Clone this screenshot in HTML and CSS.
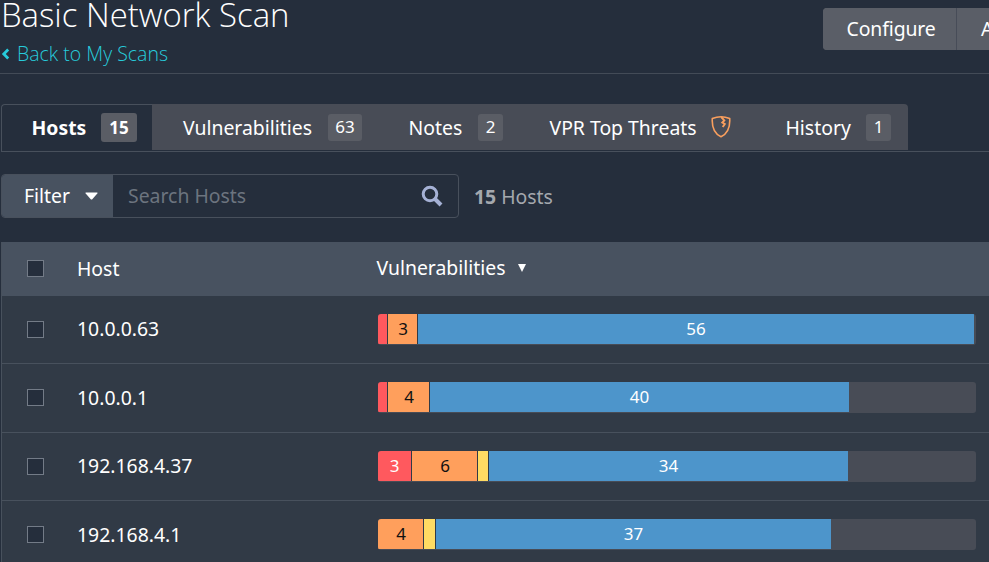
FILE: index.html
```html
<!DOCTYPE html>
<html lang="en">
<head>
<meta charset="utf-8">
<title>Basic Network Scan</title>
<link rel="stylesheet" href="styles.css">
</head>
<body>
<header class="page-header">
  <div class="heading">
    <h1>Basic Network Scan</h1>
    <a class="back"><svg width="9" height="12" viewBox="0 0 9 12"><path d="M7.2 1.6 2.8 6l4.4 4.4" fill="none" stroke="currentColor" stroke-width="2.8"/></svg><span>Back to My Scans</span></a>
  </div>
  <div class="actions"><button>Configure</button><button>Audit Trail</button></div>
</header>
<nav class="tabs">
  <a class="tab active"><span class="tab-hosts">Hosts</span><b class="badge">15</b></a>
  <div class="tab-group">
    <a class="tab tab-vulns"><span>Vulnerabilities</span><b class="badge wide">63</b></a>
    <a class="tab tab-notes"><span>Notes</span><b class="badge">2</b></a>
    <a class="tab tab-vpr"><span>VPR Top Threats</span><svg class="shield" width="20" height="24" viewBox="0 0 20 24"><path d="M10 1.7C7 1.7 4 2.4 1.3 3.5c-.5 8 1.4 14.800 8.700 18.200C17.300 18.300 19.200 11.500 18.700 3.500 16 2.400 13 1.700 10 1.700Z" fill="none" stroke="#f99f5e" stroke-width="1.600"/><path d="m10.200 2 3.100 3.400-2 2.100 2.500 1.500-2.100 3" fill="none" stroke="#f99f5e" stroke-width="1.900"/></svg></a>
    <a class="tab tab-history"><span>History</span><b class="badge">1</b></a>
  </div>
</nav>
<section class="toolbar">
  <div class="search">
    <button class="filter"><span>Filter</span><svg width="13" height="8" viewBox="0 0 13 8"><path d="M1 .5h11q1 .2.300 1L7.300 7.200q-.8.700-1.600 0L.700 1.500Q0 .700 1 .5Z" fill="#fff"/></svg></button>
    <div class="field"><span>Search Hosts</span><svg width="22" height="22" viewBox="0 0 22 22" fill="none" stroke="#a5b1d5"><circle cx="9" cy="9" r="6.800" stroke-width="3"/><path d="m14 14 6 6" stroke-width="4"/></svg></div>
  </div>
  <p class="count"><b>15</b> Hosts</p>
</section>
<main class="table">
  <div class="row head"><i class="check"></i><span class="host">Host</span><span class="sort">Vulnerabilities<svg width="8" height="8" viewBox="0 0 8 8"><path d="M0 0h8L4 8Z" fill="#fff"/></svg></span></div>
  <div class="row r1"><i class="check"></i><span class="host">10.0.0.63</span><div class="bar"><i class="crit" style="width:9px"></i><i class="high" style="width:29px">3</i><i class="info" style="width:556px">56</i></div></div>
  <div class="row r2"><i class="check"></i><span class="host">10.0.0.1</span><div class="bar"><i class="crit" style="width:9px"></i><i class="high" style="width:41px">4</i><i class="info" style="width:419px">40</i></div></div>
  <div class="row r3"><i class="check"></i><span class="host">192.168.4.37</span><div class="bar"><i class="crit" style="width:33px">3</i><i class="high" style="width:65px">6</i><i class="med" style="width:10px"></i><i class="info" style="width:359px">34</i></div></div>
  <div class="row r4"><i class="check"></i><span class="host">192.168.4.1</span><div class="bar"><i class="high" style="width:45px">4</i><i class="med" style="width:11px"></i><i class="info" style="width:395px">37</i></div></div>
</main>
</body>
</html>
```
FILE: styles.css
```css
* { box-sizing: border-box; }
html { overflow: hidden; }
body { margin: 0; width: 989px; height: 562px; overflow: hidden; background: #252e3c; color: #fff; font: 19.4px/28px "Noto Sans", "Open Sans", sans-serif; white-space: nowrap; }
svg { display: block; flex: none; }
button { border: 0; padding: 0; margin: 0; color: #fff; font: inherit; }
h1 { margin: 0; padding-left: 1px; font: 300 32.9px/30px "Open Sans", sans-serif; }
.page-header { display: flex; justify-content: space-between; height: 74px; border-bottom: 1px solid #434b57; }
.heading { flex: none; }
.back { display: flex; align-items: center; margin-top: 10px; padding-left: 1px; gap: 7px; color: #27cbdb; font: 300 19.5px/28px "Open Sans", sans-serif; }
.actions { display: flex; flex: none; width: 166px; height: 42px; margin-top: 8px; overflow: hidden; border-radius: 4px 0 0 4px; background: #5a5e67; }
.actions button { flex: none; background: #5a5e67; padding: 0 0 0 24px; text-align: left; }
.actions button:first-child { width: 134px; padding-left: 23.5px; border-right: 1px solid #474c58; letter-spacing: -.1px; }
.tabs { display: flex; margin: 30px 0 0 1px; height: 48px; border-bottom: 1px solid #48505c; }
.tab { display: flex; align-items: center; height: 46px; }
.tab-group .tab > span { padding-top: 2px; }
.active { width: 151px; height: 47px; padding: 0 0 1px 29.5px; border: 1px solid #48505c; border-width: 1px 0 0 1px; border-radius: 4px 0 0 0; font-weight: 700; }
.tab-hosts { width: 69.5px; }
.tab-group { display: flex; width: 756px; height: 46px; background: #484c56; border-radius: 0 4px 0 0; }
.tab-vulns { width: 226px; padding-left: 31px; }
.tab-vulns span { width: 145px; }
.tab-notes { width: 141px; padding-left: 30.5px; }
.tab-notes span { width: 69.5px; }
.tab-vpr { width: 236px; padding-left: 30.5px; }
.tab-vpr span { width: 161.5px; }
.tab-history { padding-left: 30.5px; }
.tab-history span { width: 80.5px; }
.badge { width: 25px; height: 27px; border-radius: 3px; background: #5a5d65; font-size: 17px; line-height: 25px; font-weight: 400; text-align: center; }
.wide { width: 34px; }
.active .badge { width: 36px; height: 29px; line-height: 29px; font-weight: 700; font-size: 17px; }
.toolbar { display: flex; align-items: center; margin: 22px 0 24px 1px; height: 44px; }
.search { display: flex; width: 458px; height: 44px; border: 1px solid #48505c; border-radius: 4px; overflow: hidden; }
.filter { display: flex; align-items: center; width: 111px; padding-left: 22px; gap: 15px; background: #485260; }
.field { display: flex; flex: 1; align-items: center; justify-content: space-between; padding: 0 15px; color: #6c747f; }
.count { margin: 2px 0 0 15px; color: #a4a8ae; }
.table { border-left: 1px solid #48515d; margin-left: 1px; background: #313a46; }
.row { display: flex; align-items: center; height: 68px; border-bottom: 1px solid #48515d; padding-left: 25px; }
.head { height: 54px; background: #485260; border: 0; padding-bottom: 1px; }
.r2, .r4 { height: 69px; padding-bottom: 1px; }
.check { width: 17px; height: 17px; border: 1px solid #737b87; background: #252e3c; }
.host { width: 300px; margin-left: 33px; }
.head .host { padding-top: 1px; }
.r1 .host, .r3 .host { padding-bottom: 1px; }
.sort { display: flex; align-items: center; gap: 12px; margin-left: -.5px; padding-bottom: 1px; }
.bar { display: flex; gap: 1px; width: 598px; height: 31px; border-radius: 3px; overflow: hidden; background: #484c56; margin-left: 1px; }
.bar i { flex: none; height: 30px; line-height: 30px; font-size: 17px; font-style: normal; text-align: center; box-shadow: 1px 0 #313a46; }
.bar .crit { background: #ff595e; }
.bar .high { background: #ff9f5c; color: #111; padding-left: 1px; }
.med { background: #ffdb63; }
.bar .info { background: #4d95cb; box-shadow: none; }
```
